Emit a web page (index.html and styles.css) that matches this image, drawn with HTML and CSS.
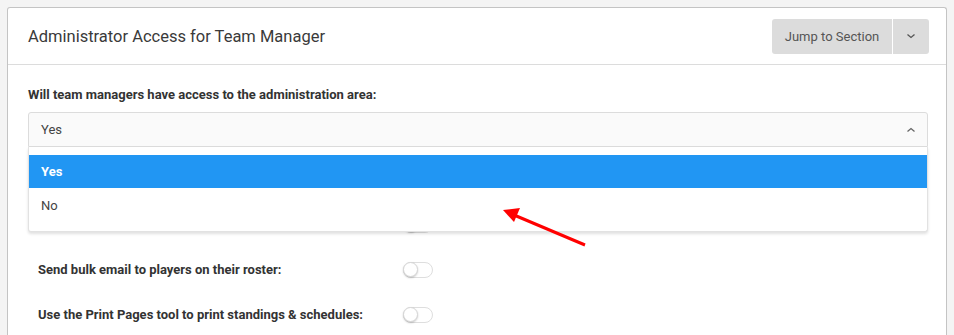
FILE: index.html
```html
<!DOCTYPE html>
<html lang="en">
<head>
    <meta charset="UTF-8">
    <meta name="viewport" content="width=device-width, initial-scale=1.0">
    <title>Team Manager Access</title>
    <link rel="stylesheet" href="styles.css">
</head>
<body>

    <div class="card">
        <div class="card-header">
            <h2>Administrator Access for Team Manager</h2>
            <div class="btn-group">
                <button type="button" class="btn">Jump to Section</button>
                <button type="button" class="btn btn-caret">
                    <svg width="10" height="6" viewBox="0 0 10 6"><path d="M1.5 1.5 L5 4.5 L8.5 1.5" fill="none" stroke="#555" stroke-width="1.3"/></svg>
                </button>
            </div>
        </div>

        <div class="card-body">
            <label class="field-label">Will team managers have access to the administration area:</label>
            <div class="select-wrap">
                <div class="select-box">
                    <span>Yes</span>
                    <svg width="10" height="6" viewBox="0 0 10 6"><path d="M1.5 4.5 L5 1.5 L8.5 4.5" fill="none" stroke="#666" stroke-width="1.3"/></svg>
                </div>
                <ul class="select-menu">
                    <li class="active">Yes</li>
                    <li>No</li>
                </ul>
            </div>

            <div class="options">
                <div class="option-row">
                    <span class="option-label"></span>
                    <span class="toggle"></span>
                </div>
                <div class="option-row">
                    <span class="option-label">Send bulk email to players on their roster:</span>
                    <span class="toggle"></span>
                </div>
                <div class="option-row">
                    <span class="option-label">Use the Print Pages tool to print standings &amp; schedules:</span>
                    <span class="toggle"></span>
                </div>
            </div>
        </div>
    </div>

    <!-- annotation arrow -->
    <svg class="annotation" width="954" height="335" viewBox="0 0 954 335">
        <line x1="585" y1="245" x2="514" y2="215" stroke="#ff0000" stroke-width="3"/>
        <polygon points="503,210 520,208 514,222" fill="#ff0000"/>
    </svg>

</body>
</html>
```

FILE: styles.css
```css
body {
    margin: 0;
    padding: 7px 7px 0 7px;
    font-family: Roboto, "Liberation Sans", Arial, sans-serif;
    background-color: #f4f4f4;
    overflow: hidden;
    height: 335px;
    box-sizing: border-box;
}

.card {
    background-color: #fff;
    border: 1px solid #c4c4c4;
    border-bottom: none;
    border-radius: 3px 3px 0 0;
    height: 400px;
}

.card-header {
    display: flex;
    align-items: center;
    justify-content: space-between;
    height: 56px;
    padding: 0 17px 0 20px;
    border-bottom: 1px solid #dcdcdc;
}

.card-header h2 {
    margin: 0;
    font-size: 16.5px;
    font-weight: 400;
    color: #3a3a3a;
}

.btn-group {
    display: flex;
    height: 35px;
}

.btn {
    border: none;
    background-color: #dcdcdc;
    color: #555;
    font-family: inherit;
    font-size: 13px;
    padding: 0 12px;
    white-space: nowrap;
    border-radius: 3px 0 0 3px;
    width: 120px;
    cursor: pointer;
}

.btn-caret {
    width: 36px;
    padding: 0;
    margin-left: 1px;
    border-radius: 0 3px 3px 0;
    display: flex;
    align-items: center;
    justify-content: center;
}

.card-body {
    padding: 21px 18px 0 20px;
}

.field-label {
    display: block;
    font-size: 13px;
    font-weight: 700;
    color: #333;
    line-height: 18px;
    margin-bottom: 8px;
}

.select-wrap {
    position: relative;
}

.select-box {
    display: flex;
    align-items: center;
    justify-content: space-between;
    height: 33px;
    padding: 0 11px 0 12px;
    background-color: #fafafa;
    border: 1px solid #dcdcdc;
    border-radius: 3px 3px 0 0;
    font-size: 13px;
    color: #444;
}

.select-menu {
    position: absolute;
    top: 100%;
    left: 0;
    right: 0;
    z-index: 2;
    margin: 0;
    padding: 8px 0 7px 0;
    list-style: none;
    background-color: #fff;
    border: 1px solid #e2e2e2;
    border-top: none;
    border-radius: 0 0 3px 3px;
    box-shadow: 0 2px 3px rgba(0, 0, 0, 0.12);
}

.select-menu li {
    height: 36px;
    line-height: 36px;
    padding: 0 12px;
    font-size: 13px;
    color: #444;
}

.select-menu li.active {
    height: 33px;
    line-height: 33px;
    background-color: #2196f3;
    color: #fff;
    font-weight: 700;
}

.options {
    margin-top: 55px;
    padding-left: 10px;
}

.option-row {
    display: flex;
    align-items: center;
    height: 45px;
}

.option-label {
    width: 365px;
    font-size: 13px;
    font-weight: 700;
    color: #333;
}

.toggle {
    position: relative;
    width: 28px;
    height: 14px;
    border: 1px solid #dedede;
    border-radius: 8px;
    background-color: #fff;
}

.toggle::after {
    content: "";
    position: absolute;
    left: -1px;
    top: -1px;
    width: 15px;
    height: 15px;
    border-radius: 50%;
    background-color: #fff;
    border: 1px solid #d6d6d6;
    box-sizing: border-box;
    box-shadow: 0 1px 2px rgba(0, 0, 0, 0.2);
}

.annotation {
    position: absolute;
    left: 0;
    top: 0;
    z-index: 5;
    pointer-events: none;
}
```
